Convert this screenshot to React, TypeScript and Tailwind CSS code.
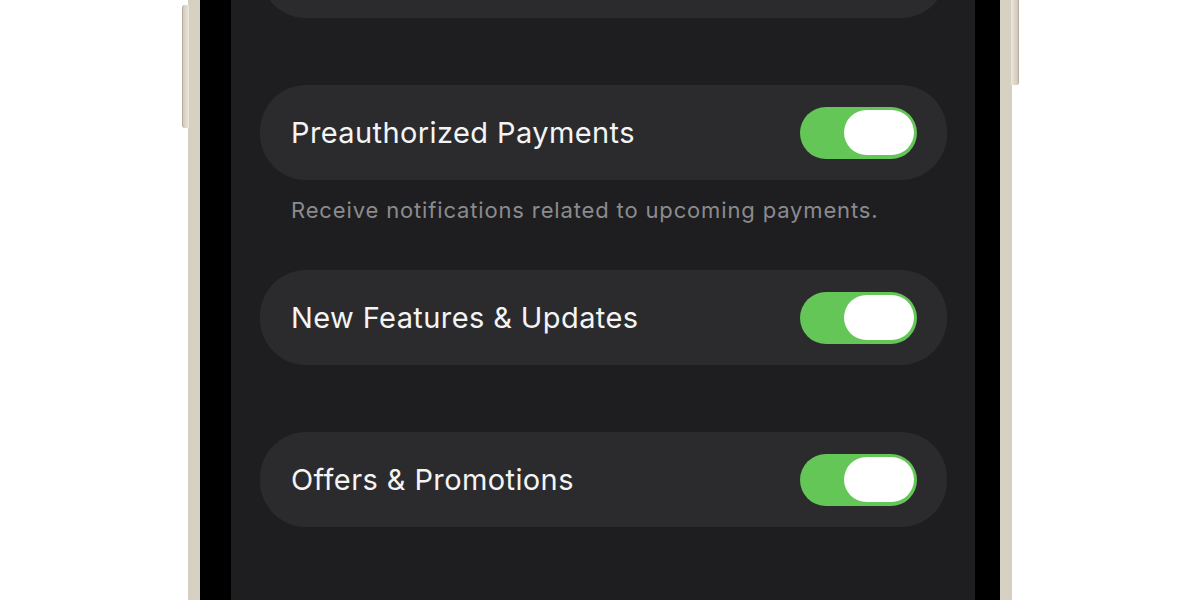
import { useState } from 'react'

type Row = {
  id: string
  label: string
  note?: string
}

const ROWS: Row[] = [
  { id: 'preauth', label: 'Preauthorized Payments', note: 'Receive notifications related to upcoming payments.' },
  { id: 'features', label: 'New Features & Updates' },
  { id: 'offers', label: 'Offers & Promotions' },
]

function Toggle({ on, onChange }: { on: boolean; onChange: () => void }) {
  return (
    <button
      onClick={onChange}
      className={`flex items-center w-[117px] h-[52px] rounded-full p-[4px] pr-[3px] shrink-0 ${
        on ? 'justify-end bg-[#63c657]' : 'justify-start bg-[#3a3a3c]'
      }`}
    >
      <span className="block w-[70px] h-[45px] rounded-full bg-white" />
    </button>
  )
}

export default function App() {
  const [state, setState] = useState<Record<string, boolean>>({
    preauth: true,
    features: true,
    offers: true,
  })

  const flip = (id: string) => setState((s) => ({ ...s, [id]: !s[id] }))

  return (
    <div
      className="relative w-[1200px] h-[600px] bg-white flex overflow-hidden"
      style={{ fontFamily: 'Inter, "Noto Sans", sans-serif' }}
    >
      {/* Side buttons */}
      <div className="absolute left-[182px] top-[5px] w-[7px] h-[123px] rounded-l-[3px] bg-gradient-to-r from-[#d2cbbc] to-[#ece7dc] border-l border-[#b5ae9e]" />
      <div className="absolute left-[1011px] top-[-10px] w-[8px] h-[95px] rounded-r-[3px] bg-gradient-to-r from-[#ece7dc] to-[#cfc8b9] border-r border-[#b5ae9e]" />

      {/* Phone frame */}
      <div className="ml-[188px] w-[824px] h-[640px] -mt-[20px] px-[12px] bg-gradient-to-r from-[#d6d0c2] via-[#f1ede4] to-[#d6d0c2]">
        <div className="h-full bg-black pl-[31px] pr-[25px]">
          {/* Screen */}
          <div className="h-full bg-[#1e1e20] pl-[29px] pr-[28px] pt-[20px]">
            <div className="h-[95px] -mt-[77px] rounded-[46px] bg-[#2b2b2e]" />
            <div className="h-[67px]" />
            {ROWS.map((row, i) => (
              <div key={row.id}>
                <div className="h-[95px] rounded-[46px] bg-[#2b2b2e] flex items-center justify-between pl-[31px] pr-[30px]">
                  <span className="text-[29px] text-[#f4f4f5] tracking-[0.4px]">{row.label}</span>
                  <Toggle on={state[row.id]} onChange={() => flip(row.id)} />
                </div>
                {row.note ? (
                  <div className="h-[90px] pt-[16px] pl-[31px]">
                    <p className="text-[22px] leading-[28px] text-[#8b8b8f] tracking-[0.85px]">{row.note}</p>
                  </div>
                ) : (
                  i < ROWS.length - 1 && <div className="h-[67px]" />
                )}
              </div>
            ))}
          </div>
        </div>
      </div>
    </div>
  )
}
